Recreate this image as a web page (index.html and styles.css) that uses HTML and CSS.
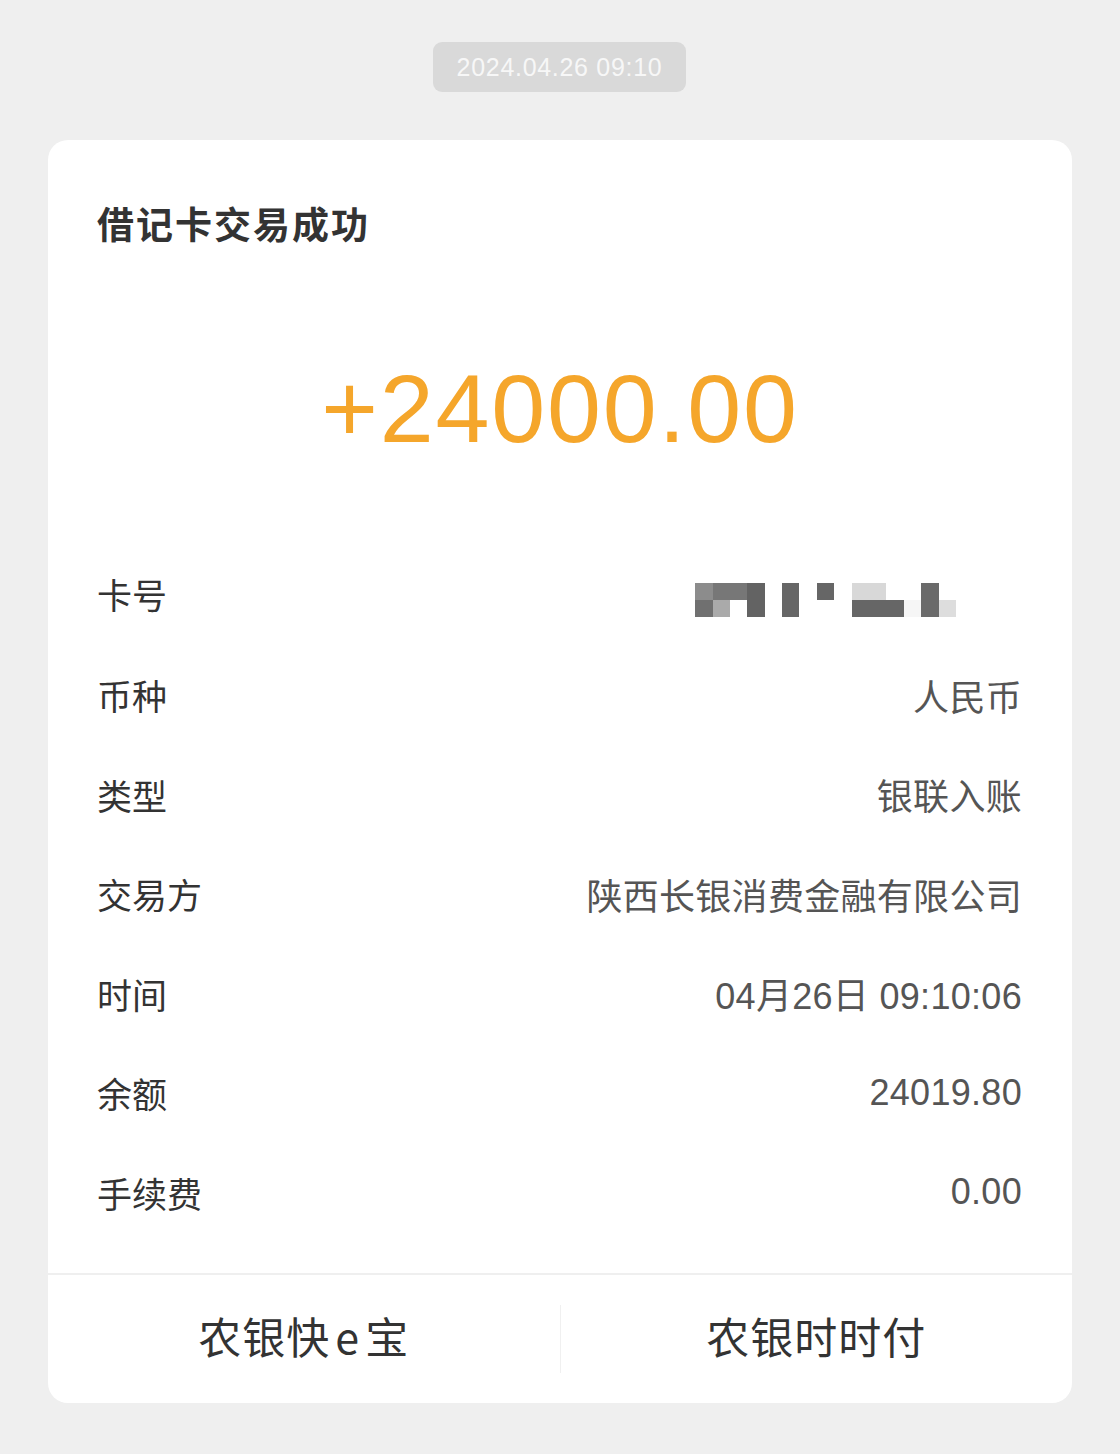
FILE: index.html
```html
<!DOCTYPE html>
<html lang="zh-CN">
<head>
<meta charset="utf-8">
<title>借记卡交易成功</title>
<link rel="stylesheet" href="styles.css">
</head>
<body>
<div class="page">
  <div class="stamp">2024.04.26 09:10</div>
  <div class="card">
    <div class="title">借记卡交易成功</div>
    <div class="amount">+24000.00</div>
    <div class="rows">
      <div class="row first">
        <span class="label">卡号</span>
        <div class="mosaic">
          <i class="p1"></i><i class="p2"></i><i class="p2"></i><i class="p3"></i><i></i><i class="p4"></i><i></i><i class="p4"></i><i></i><i class="p5"></i><i class="p5"></i><i></i><i></i><i class="p6"></i><i></i>
          <i class="p7"></i><i class="p8"></i><i></i><i class="p3"></i><i></i><i class="p4"></i><i></i><i></i><i></i><i class="p4"></i><i class="p4"></i><i class="p4"></i><i class="p9"></i><i class="p6"></i><i class="p10"></i>
        </div>
      </div>
      <div class="row"><span class="label">币种</span><span class="value">人民币</span></div>
      <div class="row"><span class="label">类型</span><span class="value">银联入账</span></div>
      <div class="row"><span class="label">交易方</span><span class="value">陕西长银消费金融有限公司</span></div>
      <div class="row"><span class="label">时间</span><span class="value">04月26日 09:10:06</span></div>
      <div class="row"><span class="label">余额</span><span class="value">24019.80</span></div>
      <div class="row"><span class="label">手续费</span><span class="value">0.00</span></div>
    </div>
    <div class="footer">
      <div class="btn">农银快<span class="e">e</span>宝</div>
      <div class="sep"></div>
      <div class="btn">农银时时付</div>
    </div>
  </div>
</div>
</body>
</html>
```

FILE: styles.css
```css
* { box-sizing: border-box; }
html, body {
  margin: 0;
  padding: 0;
  background: #efefef;
}
body {
  font-family: "Liberation Sans", "Noto Sans CJK SC", sans-serif;
  width: 1120px;
  height: 1454px;
  overflow: hidden;
}
.page {
  display: flex;
  flex-direction: column;
  align-items: center;
  padding-top: 42px;
}
.stamp {
  width: 253px;
  height: 50px;
  margin-left: -1px;
  background: #d9d9d9;
  border-radius: 9px;
  color: #f7f7f7;
  font-size: 25px;
  letter-spacing: 0.7px;
  display: flex;
  align-items: center;
  justify-content: center;
}
.card {
  margin-top: 48px;
  width: 1024px;
  height: 1263px;
  background: #ffffff;
  border-radius: 20px;
  display: flex;
  flex-direction: column;
  overflow: hidden;
}
.title {
  margin: 58px 0 0 49px;
  height: 50px;
  line-height: 50px;
  font-family: "Noto Sans CJK SC", sans-serif;
  font-weight: 700;
  font-size: 37px;
  letter-spacing: 2px;
  color: #333333;
}
.amount {
  margin-top: 101px;
  height: 120px;
  line-height: 120px;
  text-align: center;
  font-size: 97px;
  color: #f5a62b;
  letter-spacing: 1.8px;
  margin-left: 0;
}
.rows {
  margin-top: 72px;
  padding: 0 50px 0 49px;
  display: flex;
  flex-direction: column;
}
.row {
  height: 99.5px;
  display: flex;
  align-items: center;
  justify-content: space-between;
}
.row.first {
  height: 104px;
}
.label {
  font-family: "Noto Sans CJK SC", sans-serif;
  font-size: 35px;
  color: #333333;
}
.value {
  font-family: "Liberation Sans", "Noto Sans CJK SC", sans-serif;
  font-size: 36px;
  color: #555555;
  letter-spacing: 0.3px;
}
.mosaic {
  margin-right: 66px;
  margin-top: 14px;
  display: grid;
  grid-template-columns: repeat(15, 17.4px);
  grid-template-rows: repeat(2, 17px);
}
.mosaic i { display: block; }
.p1 { background: #8c8c8c; }
.p2 { background: #777777; }
.p3 { background: #636363; }
.p4 { background: #666666; }
.p5 { background: #d8d8d8; }
.p6 { background: #6a6a6a; }
.p7 { background: #707070; }
.p8 { background: #aaaaaa; }
.p9 { background: #f6f6f6; }
.p10 { background: #dddddd; }
.footer {
  margin-top: auto;
  height: 130px;
  border-top: 2px solid #efefef;
  display: flex;
  align-items: center;
}
.btn {
  flex: 1;
  text-align: center;
  font-family: "Noto Sans CJK SC", sans-serif;
  font-size: 43px;
  letter-spacing: 1px;
  color: #333333;
  padding-bottom: 8px;
}
.btn .e {
  padding: 0 5px;
}
.sep {
  width: 1px;
  height: 68px;
  background: #f0f0f0;
}
```
